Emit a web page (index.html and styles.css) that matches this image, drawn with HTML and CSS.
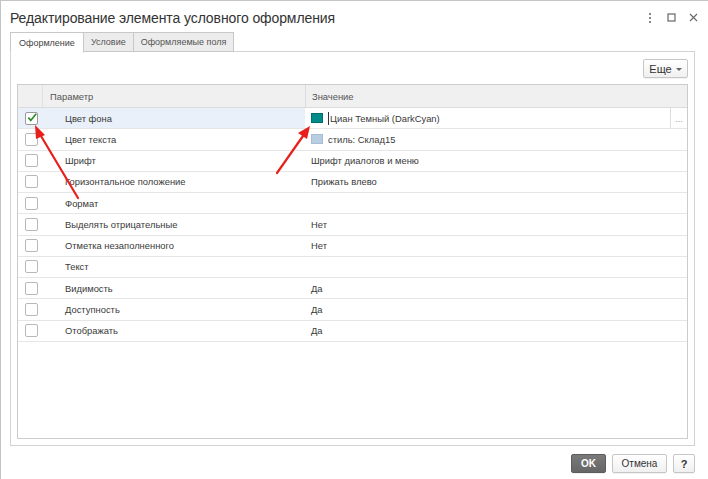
FILE: index.html
```html
<!DOCTYPE html>
<html lang="ru">
<head>
<meta charset="utf-8">
<link rel="stylesheet" href="styles.css">
</head>
<body>
<div class="window">
  <div class="titlebar">
    <div class="title">Редактирование элемента условного оформления</div>
    <div class="controls">
      <svg width="8" height="10" viewBox="0 0 8 10"><rect x="3" y="0" width="2" height="2" fill="#888"/><rect x="3" y="4" width="2" height="2" fill="#888"/><rect x="3" y="8" width="2" height="2" fill="#888"/></svg>
      <svg width="9" height="9" viewBox="0 0 9 9"><rect x="1" y="1" width="7" height="7" fill="none" stroke="#666" stroke-width="1.2"/></svg>
      <svg width="9" height="9" viewBox="0 0 9 9"><path d="M1 1 L8 8 M8 1 L1 8" stroke="#666" stroke-width="1.1"/></svg>
    </div>
  </div>
  <div class="tabs">
    <div class="tab active">Оформление</div>
    <div class="tab">Условие</div>
    <div class="tab">Оформляемые поля</div>
  </div>
  <div class="panel">
    <div class="toolbar">
      <div class="btn more">Еще <span class="caret"></span></div>
    </div>
    <div class="grid">
      <div class="row head">
        <div class="cell chk"></div>
        <div class="cell param">Параметр</div>
        <div class="cell value">Значение</div>
      </div>
      <div class="row selected">
        <div class="cell chk"><span class="box checked"><svg width="12" height="11" viewBox="0 0 12 11"><path d="M1.5 5.5 L4.5 9 L11 1" fill="none" stroke="#2a8a2a" stroke-width="2"/></svg></span></div>
        <div class="cell param">Цвет фона</div>
        <div class="cell value edit"><span class="swatch dark"></span><span class="cursor"></span><span>Циан Темный (DarkCyan)</span><span class="dots">...</span></div>
      </div>
      <div class="row">
        <div class="cell chk"><span class="box"></span></div>
        <div class="cell param">Цвет текста</div>
        <div class="cell value"><span class="swatch light"></span><span>стиль: Склад15</span></div>
      </div>
      <div class="row">
        <div class="cell chk"><span class="box"></span></div>
        <div class="cell param">Шрифт</div>
        <div class="cell value">Шрифт диалогов и меню</div>
      </div>
      <div class="row">
        <div class="cell chk"><span class="box"></span></div>
        <div class="cell param">Горизонтальное положение</div>
        <div class="cell value">Прижать влево</div>
      </div>
      <div class="row">
        <div class="cell chk"><span class="box"></span></div>
        <div class="cell param">Формат</div>
        <div class="cell value"></div>
      </div>
      <div class="row">
        <div class="cell chk"><span class="box"></span></div>
        <div class="cell param">Выделять отрицательные</div>
        <div class="cell value">Нет</div>
      </div>
      <div class="row">
        <div class="cell chk"><span class="box"></span></div>
        <div class="cell param">Отметка незаполненного</div>
        <div class="cell value">Нет</div>
      </div>
      <div class="row">
        <div class="cell chk"><span class="box"></span></div>
        <div class="cell param">Текст</div>
        <div class="cell value"></div>
      </div>
      <div class="row">
        <div class="cell chk"><span class="box"></span></div>
        <div class="cell param">Видимость</div>
        <div class="cell value">Да</div>
      </div>
      <div class="row">
        <div class="cell chk"><span class="box"></span></div>
        <div class="cell param">Доступность</div>
        <div class="cell value">Да</div>
      </div>
      <div class="row">
        <div class="cell chk"><span class="box"></span></div>
        <div class="cell param">Отображать</div>
        <div class="cell value">Да</div>
      </div>
    </div>
  </div>
  <div class="footer">
    <div class="btn ok">OK</div>
    <div class="btn cancel">Отмена</div>
    <div class="btn help">?</div>
  </div>
  <svg class="arrows" width="708" height="479" viewBox="0 0 708 479">
    <g stroke="#e8201c" stroke-width="2.2" fill="#e8201c" stroke-linecap="round">
      <line x1="78" y1="198" x2="41" y2="136"/>
      <polygon points="35,125 45,135 36,139" stroke="none"/>
      <line x1="277" y1="173" x2="303" y2="136"/>
      <polygon points="310,126 307,139 298,133" stroke="none"/>
    </g>
  </svg>
</div>
</body>
</html>
```

FILE: styles.css
```css
* { box-sizing: border-box; }
html, body { margin: 0; padding: 0; background: #fff; }
body { font-family: "Liberation Sans", Arial, sans-serif; color: #333; }

.window {
  position: relative;
  width: 708px;
  height: 479px;
  border-top: 1px solid #c4c4c4;
  border-left: 1px solid #c4c4c4;
  background: #fff;
  display: flex;
  flex-direction: column;
}

.titlebar {
  height: 31px;
  display: flex;
  align-items: center;
  padding-left: 9px;
  padding-right: 10px;
}
.title { font-size: 14px; letter-spacing: -0.1px; color: #333; flex: 1; padding-top: 2px; }
.controls { display: flex; align-items: center; gap: 13px; padding-top: 2px; }

.tabs { display: flex; margin-left: 9px; height: 20px; position: relative; z-index: 1; }
.tab {
  font-size: 9px;
  color: #555;
  border: 1px solid #c8c8c8;
  border-left: none;
  background: #ececec;
  padding: 0 7px;
  display: flex;
  align-items: center;
  height: 20px;
}
.tab.active {
  background: #fff;
  border-left: 1px solid #c8c8c8;
  border-bottom-color: #fff;
  height: 21px;
  padding: 0 8px;
  color: #444;
}

.panel {
  margin: 0 13px 0 9px;
  border: 1px solid #d2d2d2;
  height: 395px;
  margin-top: -1px;
  display: flex;
  flex-direction: column;
}
.toolbar { display: flex; justify-content: flex-end; padding: 7px 6px 0 0; }

.btn {
  font-size: 10px;
  color: #333;
  border: 1px solid #c6c6c6;
  border-radius: 2px;
  background: linear-gradient(#ffffff, #f0f0f0);
  display: flex;
  align-items: center;
  justify-content: center;
  box-shadow: 0 1px 0 rgba(0,0,0,0.05);
}
.more { width: 45px; height: 19px; gap: 4px; font-size: 11px; }
.caret { width: 0; height: 0; border-left: 3px solid transparent; border-right: 3px solid transparent; border-top: 3px solid #666; margin-top: 1px; }

.grid {
  margin: 6px 6px 0 6px;
  border: 1px solid #cccccc;
  height: 355px;
  font-size: 9.4px;
  color: #3a3a3a;
}
.row {
  display: grid;
  grid-template-columns: 24px 263px 1fr;
  height: 21.27px;
  border-bottom: 1px solid #e6e6e6;
}
.row.head { height: 23px; background: #f0f0f0; border-bottom: 1px solid #dcdcdc; color: #555; }
.row.head .cell.param { padding-left: 7px; border-left: 1px solid #e0e0e0; }
.row.head .cell.value { border-left: 1px solid #dcdcdc; }
.cell { display: flex; align-items: center; white-space: nowrap; }
.cell.chk { padding-left: 7px; }
.cell.param { padding-left: 23px; }
.cell.value { padding-left: 6px; position: relative; }
.row.selected .cell.chk, .row.selected .cell.param { background: #e9f0f9; }

.box {
  width: 13px;
  height: 13px;
  border: 1px solid #b8b8b8;
  border-radius: 2px;
  background: #fff;
  display: flex;
  align-items: center;
  justify-content: center;
}
.box.checked { border-color: #999; }
.box svg { margin-top: -1px; margin-left: 1px; }

.swatch { width: 12px; height: 10px; margin-right: 5px; display: inline-block; }
.swatch.dark { background: #008b8b; border: 1px solid #006e6e; }
.swatch.light { background: #b8cde3; border: 1px solid #a8bcd2; }
.cursor { width: 1px; height: 13px; background: #334; margin-right: 1px; }
.dots {
  position: absolute;
  right: 0;
  top: 0;
  bottom: -1px;
  width: 17px;
  border-left: 1px solid #dcdcdc;
  color: #999;
  font-size: 9px;
  display: flex;
  align-items: center;
  justify-content: center;
}

.footer {
  display: flex;
  justify-content: flex-end;
  gap: 6px;
  padding: 8px 13px 0 0;
}
.footer .btn { height: 19px; }
.ok { width: 35px; background: linear-gradient(#7a7a7a, #666); border-color: #5c5c5c; color: #fff; font-weight: bold; }
.cancel { width: 55px; font-size: 10px; }
.help { width: 22px; font-weight: bold; font-size: 11px; }

.arrows { position: absolute; left: -1px; top: -1px; pointer-events: none; }
```
